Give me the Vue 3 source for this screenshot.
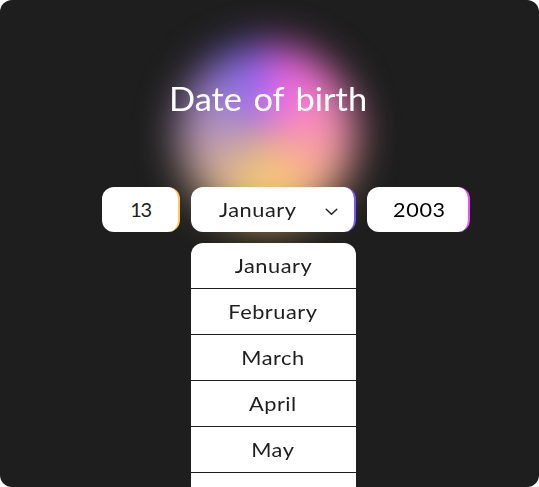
<script setup>
import { ref } from 'vue'

const day = ref('13')
const month = ref('January')
const year = ref('2003')
const months = ['January', 'February', 'March', 'April', 'May']
</script>

<template>
  <main class="card">
    <div class="glow"></div>
    <h1>Date of birth</h1>
    <div class="fields">
      <div class="field day"><span class="text">{{ day }}</span></div>
      <div class="column">
        <button class="field month" type="button">
          <span class="text">{{ month }}</span>
          <svg width="13" height="8" viewBox="0 0 13 8" fill="none">
            <path d="M1.2 1.2L6.5 6.2L11.8 1.2" stroke="#1e1e1e" stroke-width="1.4" stroke-linecap="round" stroke-linejoin="round" />
          </svg>
        </button>
        <ul>
          <li v-for="m in months" :key="m"><span class="text">{{ m }}</span></li>
        </ul>
      </div>
      <div class="field year"><span class="text">{{ year }}</span></div>
    </div>
  </main>
</template>

<style>
html, body { margin: 0; background: #fff; }
</style>

<style scoped>
.card {
  position: relative;
  box-sizing: border-box;
  width: 539px;
  height: 487px;
  padding-top: 78px;
  overflow: hidden;
  border-radius: 12px;
  background: #1e1e1e;
  color: #1e1e1e;
  font-family: Lato, "Liberation Sans", sans-serif;
}
.glow {
  position: absolute;
  left: 178px;
  top: 45px;
  width: 178px;
  height: 178px;
  border-radius: 50%;
  background: conic-gradient(#f65cf4, #f9cf6c 50%, #7a60ff);
  filter: blur(20px);
}
h1 {
  position: relative;
  margin: 0;
  height: 44px;
  padding-left: 169px;
  color: #fff;
  font-size: 32px;
  font-weight: 400;
  line-height: 42px;
  word-spacing: 2.5px;
  white-space: nowrap;
  transform: scaleX(1.075);
  transform-origin: 169px 50%;
}
.fields {
  position: relative;
  display: flex;
  align-items: flex-start;
  gap: 11px;
  padding: 65px 0 0 102px;
}
.field {
  display: flex;
  box-sizing: border-box;
  align-items: center;
  height: 45px;
  border: 0;
  border-right: 2px solid;
  border-radius: 12px;
  background: #fff;
  font-size: 20px;
  line-height: 45px;
}
.text {
  display: inline-block;
  height: 45px;
  line-height: 44px;
  letter-spacing: 0.45px;
  transform: scaleX(1.09);
}
.day {
  justify-content: center;
  width: 78px;
  padding-left: 1px;
  border-color: #ffc95a;
}
.day .text {
  letter-spacing: -1.4px;
  transform: none;
}
.month {
  justify-content: space-between;
  width: 165px;
  padding: 0 16px 0 28px;
  border-color: #7557ff;
  color: #1e1e1e;
  font-family: inherit;
}
.month .text { transform-origin: 0 50%; }
.month svg { margin-top: 4px; }
.year {
  justify-content: center;
  width: 103px;
  padding-left: 3px;
  border-color: #f64cff;
  color: #000;
}
.year .text {
  letter-spacing: 0.6px;
  transform: scaleX(1.08);
}
ul {
  box-sizing: border-box;
  width: 165px;
  height: 260px;
  margin: 11px 0 0;
  padding: 0;
  border-radius: 12px 12px 0 0;
  background: #fff;
  list-style: none;
}
li {
  display: flex;
  justify-content: center;
  height: 45px;
  border-bottom: 1px solid #1e1e1e;
  font-size: 20px;
}
li .text {
  padding-right: 1px;
  line-height: 44px;
}
</style>
